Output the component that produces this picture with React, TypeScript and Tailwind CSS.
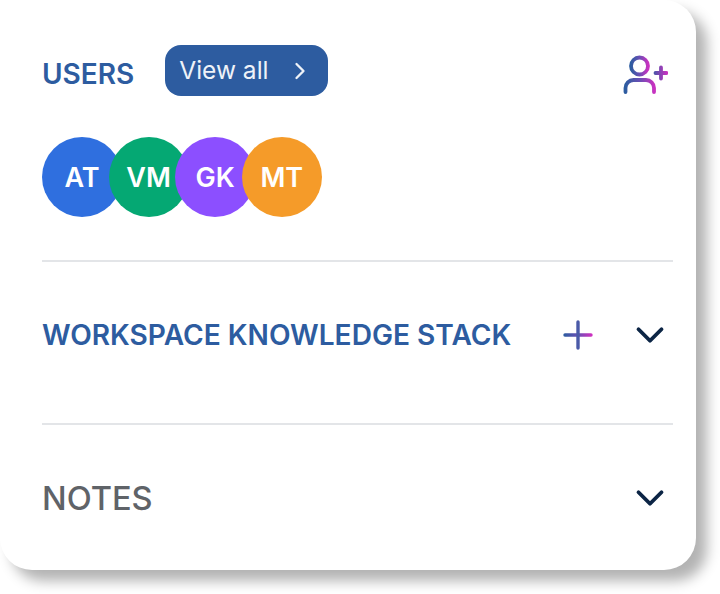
import { ChevronDown, ChevronRight } from 'lucide-react';

const users = [
    { initials: 'AT', color: 'bg-[#2f6fdf]' },
    { initials: 'VM', color: 'bg-[#05a873]' },
    { initials: 'GK', color: 'bg-[#8c4fff]' },
    { initials: 'MT', color: 'bg-[#f59b29]' },
];

const AddUserIcon = () => (
    <svg width="46" height="40" viewBox="0 0 46 40" fill="none">
        <defs>
            <linearGradient id="user-grad">
                <stop offset="0" stopColor="#2d5ca0" />
                <stop offset="0.5" stopColor="#6a4fb5" />
                <stop offset="1" stopColor="#c832c0" />
            </linearGradient>
            <linearGradient id="user-plus" gradientUnits="userSpaceOnUse" x1="32" y1="0" x2="45" y2="0">
                <stop offset="0" stopColor="#4a55a8" />
                <stop offset="1" stopColor="#c832c0" />
            </linearGradient>
        </defs>
        <g stroke="url(#user-grad)" strokeWidth="3.8" strokeLinecap="round" strokeLinejoin="round">
            <circle cx="17.5" cy="11" r="8.5" />
            <path d="M3.5 37v-4a8 8 0 0 1 8-8h12.5a8 8 0 0 1 8 8v4" />
        </g>
        <path d="M33.5 18h11M39 12.5v11" stroke="url(#user-plus)" strokeWidth="3.8" strokeLinecap="round" />
    </svg>
);

const PlusGradientIcon = () => (
    <svg width="30" height="30" viewBox="0 0 30 30" fill="none">
        <defs>
            <linearGradient id="plus-grad" gradientUnits="userSpaceOnUse" x1="1" y1="0" x2="29" y2="0">
                <stop offset="0" stopColor="#2d5ca0" />
                <stop offset="0.5" stopColor="#6a4fb5" />
                <stop offset="1" stopColor="#d030c0" />
            </linearGradient>
        </defs>
        <path d="M2 15h26" stroke="url(#plus-grad)" strokeWidth="3.4" strokeLinecap="round" />
        <path d="M15 2v26" stroke="#4a5aa8" strokeWidth="3.4" strokeLinecap="round" />
    </svg>
);

const Chevron = () => (
    <ChevronDown className="w-[46px] h-[46px] text-[#0c2545]" strokeWidth={2} />
);

export default function App() {
    return (
        <div className="w-[720px] h-[594px] bg-white overflow-hidden font-['Inter',sans-serif]">
            <div className="w-[696px] h-[570px] bg-white rounded-[32px] shadow-[11px_11px_13px_rgba(0,0,0,0.3)] pl-[42px] pr-[23px] pt-[45px]">
                <div className="flex items-center h-[51px]">
                    <h2 className="text-[28px] font-semibold text-[#2d5ca0] leading-none mt-[7px]">USERS</h2>
                    <button className="ml-[31px] w-[163px] h-[51px] rounded-[16px] bg-[#2d5ca0] text-[#eef2f8] text-[24.5px] flex items-center justify-between pl-[14px] pr-[14px]">
                        View all
                        <ChevronRight className="w-[28px] h-[28px]" strokeWidth={2} />
                    </button>
                    <div className="ml-auto mr-[5px] mt-[8px]">
                        <AddUserIcon />
                    </div>
                </div>
                <div className="flex mt-[41px] h-[80px]">
                    {users.map((user, i) => (
                        <div
                            key={user.initials}
                            className={`w-[80px] h-[80px] rounded-full flex items-center justify-center pt-[2px] text-white text-[27px] font-semibold shrink-0 ${user.color} ${i > 0 ? 'ml-[-13.4px]' : ''}`}
                        >
                            {user.initials}
                        </div>
                    ))}
                </div>
                <div className="mt-[43px] border-t-2 border-[#e3e5e8]" />
                <div className="flex items-center h-[146px]">
                    <h2 className="text-[28.1px] font-semibold text-[#2d5ca0] leading-none">WORKSPACE KNOWLEDGE STACK</h2>
                    <div className="ml-auto flex items-center gap-[34px]">
                        <PlusGradientIcon />
                        <Chevron />
                    </div>
                </div>
                <div className="mt-[15px] border-t-2 border-[#e3e5e8]" />
                <div className="flex items-center justify-between h-[146px]">
                    <h2 className="text-[32.6px] font-medium text-[#5f6368] leading-none">NOTES</h2>
                    <Chevron />
                </div>
            </div>
        </div>
    );
}
